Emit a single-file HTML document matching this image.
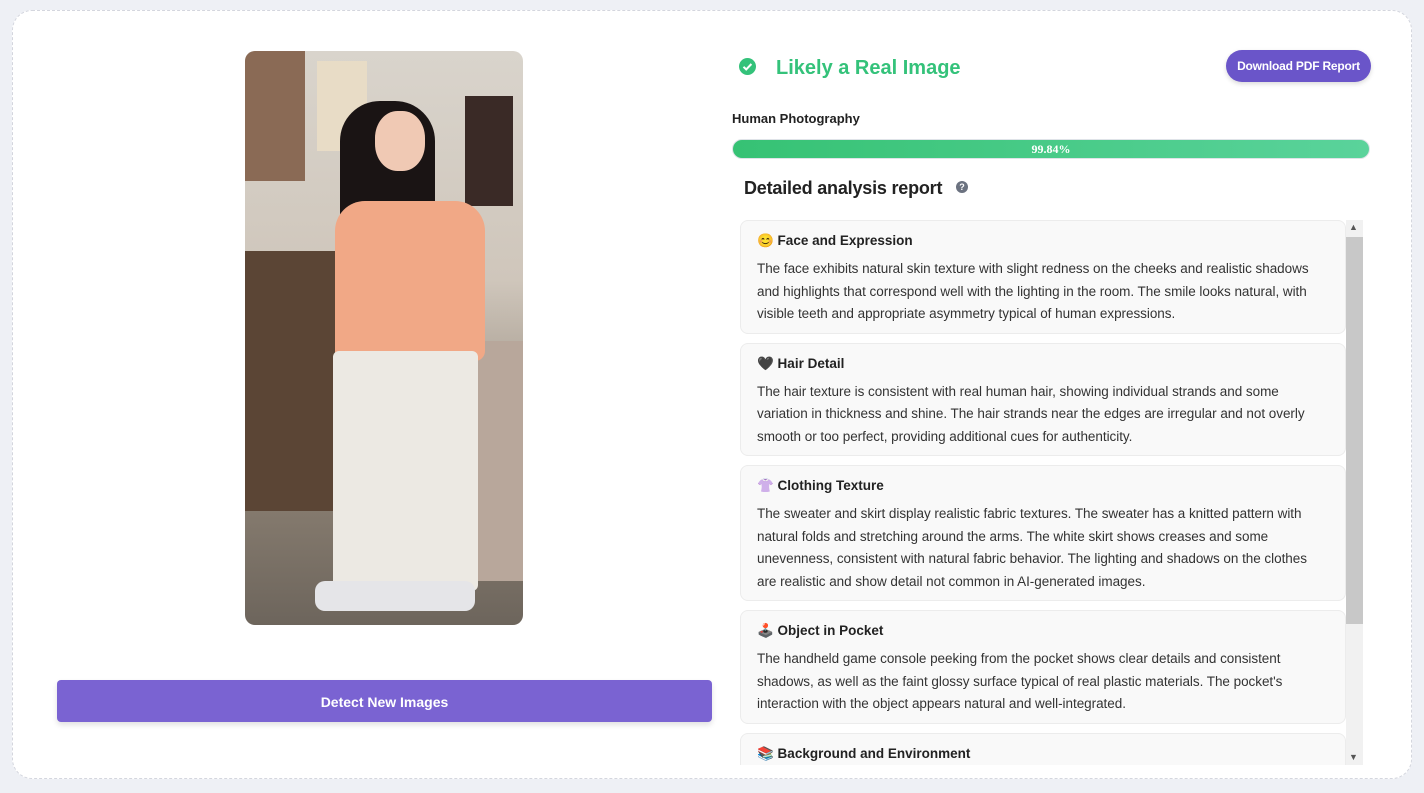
<!DOCTYPE html><html><head><style>
*{box-sizing:border-box;margin:0;padding:0}
body{width:1424px;height:793px;background:#eef0f5;font-family:"Liberation Sans",sans-serif;position:relative;overflow:hidden;color:#222}
.card{position:absolute;left:12px;top:10px;width:1400px;height:769px;background:#fff;border:1.5px dashed #d4d6de;border-radius:20px}
.photo{position:absolute;left:245px;top:51px;width:278px;height:574px;border-radius:10px;overflow:hidden;background:linear-gradient(180deg,#d9d4cc 0%,#cfc6bb 40%,#8a7f72 75%,#6d655c 100%)}
.btn{position:absolute;left:57px;top:680px;width:655px;height:42px;background:#7a63d2;border-radius:4px;color:#fff;font-weight:bold;font-size:14px;text-align:center;line-height:44px;box-shadow:0 3px 6px rgba(0,0,0,.12)}
.title{position:absolute;left:776px;top:57px;font-size:20px;font-weight:bold;color:#34c27a}
.chk{position:absolute;left:739px;top:58px;width:17px;height:17px;border-radius:50%;background:#34c27a}
.pdf{position:absolute;left:1226px;top:50px;width:145px;height:32px;border-radius:16px;background:#6a55c9;color:#fff;font-size:12px;font-weight:bold;text-align:center;line-height:33px;box-shadow:0 2px 5px rgba(0,0,0,.15);letter-spacing:-0.2px}
.hp{position:absolute;left:732px;top:111px;font-size:13px;font-weight:bold;color:#222}
.bar{position:absolute;left:732px;top:139px;width:638px;height:20px;border-radius:10px;background:linear-gradient(90deg,#36c274,#5ad39b);border:1px solid #dfe3e8;color:#fff;font-weight:bold;font-size:12px;text-align:center;line-height:18px;font-family:"Liberation Serif",serif}
.dh{position:absolute;left:744px;top:178px;font-size:18px;font-weight:bold;color:#222;letter-spacing:-0.2px}
.q{position:absolute;left:956px;top:181px;width:12px;height:12px;border-radius:50%;background:#6b7280;color:#fff;font-size:9px;text-align:center;line-height:12px;font-weight:bold}
.list{position:absolute;left:740px;top:220px;width:606px;height:545px;overflow:hidden}
.it{background:#f9f9f9;border:1px solid #ececec;border-radius:8px;padding:11px 16px 7px;margin-bottom:9px}
.it h4{font-size:13.5px;font-weight:bold;margin-bottom:8px;line-height:18px}
.it p{font-size:13.5px;line-height:22.5px;color:#333;letter-spacing:-0.04px}
.sb{position:absolute;left:1346px;top:220px;width:17px;height:545px;background:#f1f1f1}
.th{position:absolute;left:1346px;top:237px;width:17px;height:387px;background:#c8c8c8}
.ar{position:absolute;left:1349px;font-size:9px;color:#555}
</style></head><body>
<div class="card"></div>
<div class="photo">
<div style="position:absolute;left:0;top:0;width:60px;height:130px;background:#8a6a55"></div>
<div style="position:absolute;left:72px;top:10px;width:50px;height:90px;background:#e8dcc6"></div>
<div style="position:absolute;left:220px;top:45px;width:48px;height:110px;background:#3a2a26"></div>
<div style="position:absolute;left:0;top:200px;width:90px;height:260px;background:#5b4535"></div>
<div style="position:absolute;left:225px;top:290px;width:53px;height:240px;background:#b8a79b"></div>
<div style="position:absolute;left:95px;top:50px;width:95px;height:250px;background:#1a1414;border-radius:40px 40px 10px 10px"></div>
<div style="position:absolute;left:130px;top:60px;width:50px;height:60px;background:#f0c9b4;border-radius:45%"></div>
<div style="position:absolute;left:90px;top:150px;width:150px;height:160px;background:#f1a886;border-radius:30px 30px 10px 10px"></div>
<div style="position:absolute;left:88px;top:300px;width:145px;height:240px;background:#ece9e3;border-radius:6px"></div>
<div style="position:absolute;left:70px;top:530px;width:160px;height:30px;background:#e5e5e8;border-radius:10px"></div>
</div>
<div class="btn">Detect New Images</div>
<div class="chk"><svg width="17" height="17" viewBox="0 0 17 17"><path d="M4.5 8.8l2.7 2.6 5.2-5.4" stroke="#fff" stroke-width="2" fill="none"/></svg></div>
<div class="title">Likely a Real Image</div>
<div class="pdf">Download PDF Report</div>
<div class="hp">Human Photography</div>
<div class="bar">99.84%</div>
<div class="dh">Detailed analysis report</div>
<div class="q">?</div>
<div class="list">
<div class="it"><h4>😊 Face and Expression</h4><p>The face exhibits natural skin texture with slight redness on the cheeks and realistic shadows and highlights that correspond well with the lighting in the room. The smile looks natural, with visible teeth and appropriate asymmetry typical of human expressions.</p></div>
<div class="it"><h4>🖤 Hair Detail</h4><p>The hair texture is consistent with real human hair, showing individual strands and some variation in thickness and shine. The hair strands near the edges are irregular and not overly smooth or too perfect, providing additional cues for authenticity.</p></div>
<div class="it"><h4>👚 Clothing Texture</h4><p>The sweater and skirt display realistic fabric textures. The sweater has a knitted pattern with natural folds and stretching around the arms. The white skirt shows creases and some unevenness, consistent with natural fabric behavior. The lighting and shadows on the clothes are realistic and show detail not common in AI-generated images.</p></div>
<div class="it"><h4>🕹️ Object in Pocket</h4><p>The handheld game console peeking from the pocket shows clear details and consistent shadows, as well as the faint glossy surface typical of real plastic materials. The pocket's interaction with the object appears natural and well-integrated.</p></div>
<div class="it"><h4>📚 Background and Environment</h4><p>The background shows a lived-in room with shelves of books, posters and figurines.</p></div>
</div>
<div class="sb"></div><div class="th"></div>
<div class="ar" style="top:222px">▲</div><div class="ar" style="top:752px">▼</div>
</body></html>
